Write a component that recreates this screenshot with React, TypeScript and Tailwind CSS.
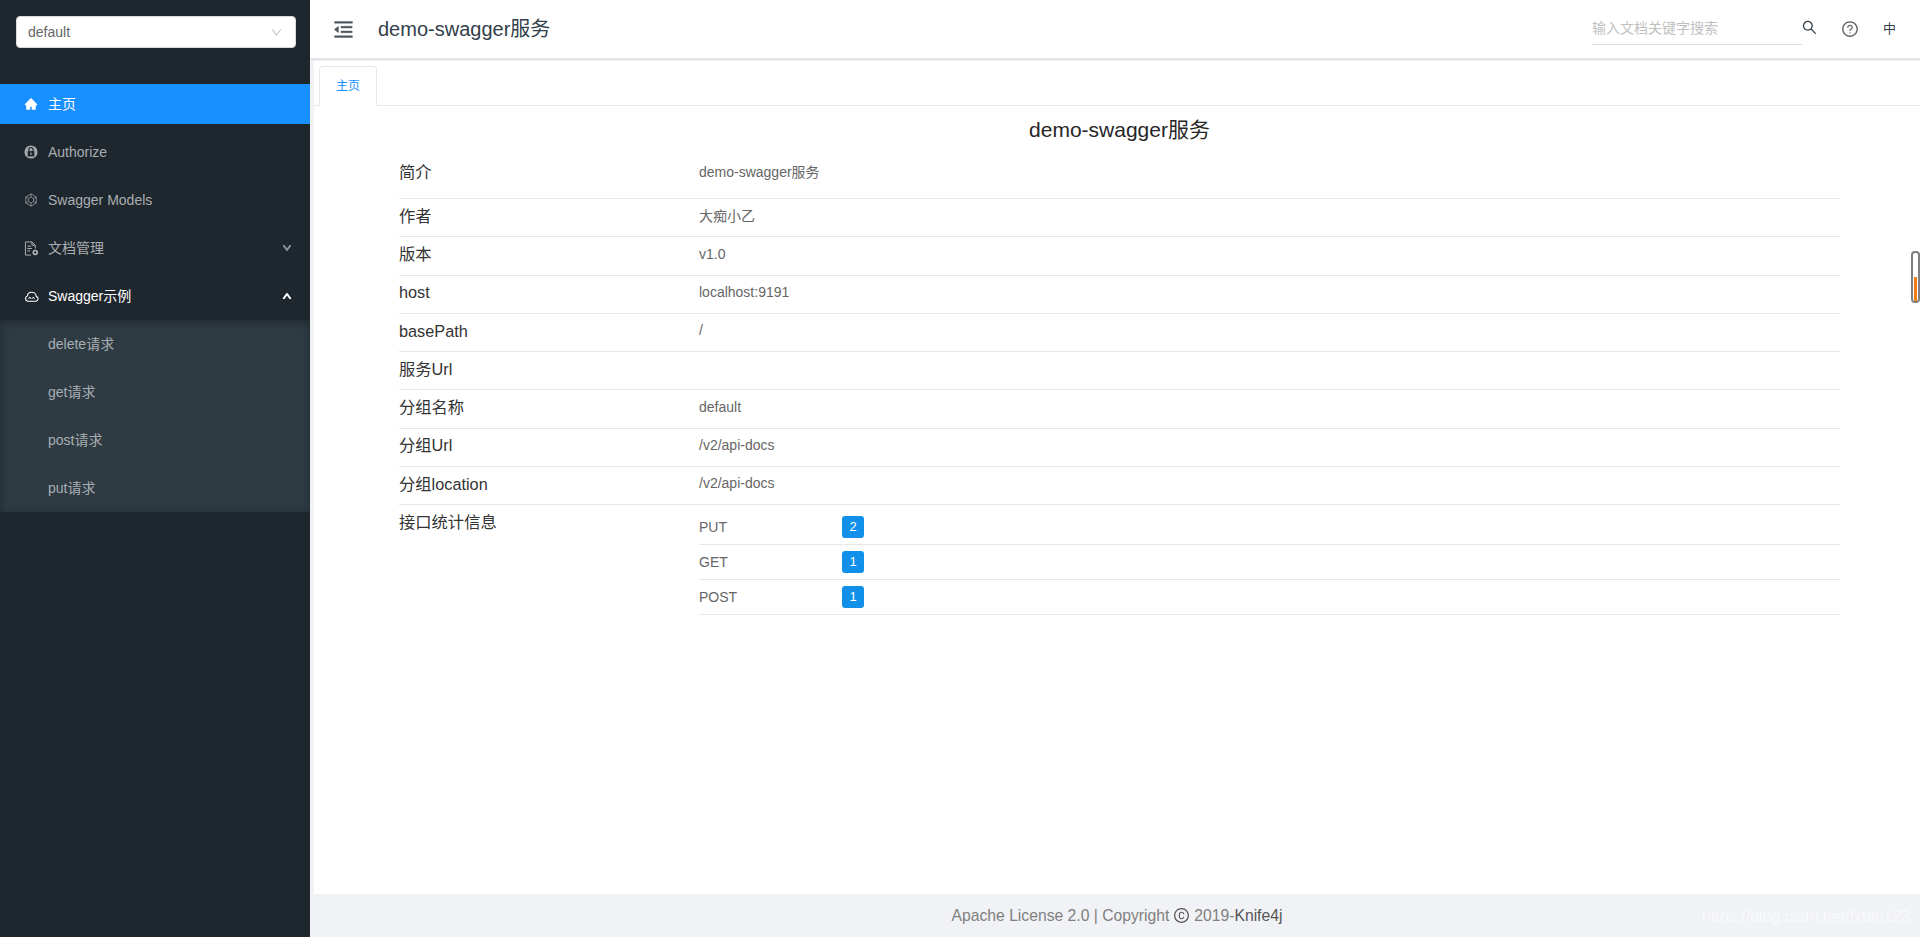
import {
  AiFillHome,
  AiOutlineCopyright,
  AiOutlineDown,
  AiOutlineMenuFold,
  AiOutlineQuestionCircle,
  AiOutlineSearch,
  AiOutlineUp,
} from 'react-icons/ai'

const font = 'font-["Liberation_Sans","Noto_Sans_CJK_SC",sans-serif]'

function LockIcon() {
  return (
    <svg viewBox="0 0 16 16" className="h-[14px] w-[14px]">
      <circle cx="8" cy="8" r="7.5" fill="#a5a9ac" />
      <path d="M4.2 7h7.6v6H4.2z" fill="#1f272e" />
      <path d="M5.6 7V5.2a2.4 2.4 0 0 1 4.8 0V7" fill="none" stroke="#1f272e" strokeWidth="1.3" />
      <rect x="7.3" y="8.6" width="1.4" height="2.8" fill="#a5a9ac" />
    </svg>
  )
}

function ModelIcon() {
  return (
    <svg viewBox="0 0 16 16" className="h-[14px] w-[14px]" fill="none" stroke="#8f9498" strokeWidth="1">
      <path d="M8 1l6 3.5v7L8 15l-6-3.5v-7z" />
      <path d="M8 4.5l3 1.8v3.4L8 11.5 5 9.7V6.3z" />
      <path d="M8 1v3.5M14 4.5l-3 1.8M14 11.5l-3-1.8M8 15v-3.5M2 11.5l3-1.8M2 4.5l3 1.8" />
    </svg>
  )
}

function FileGearIcon() {
  return (
    <svg viewBox="0 0 16 16" className="h-[15px] w-[15px]" fill="none" stroke="#b3b7ba" strokeWidth="1">
      <path d="M7.5 15H1.5V1h7l3.5 3.5V8" />
      <path d="M8.5 1v3.5H12" />
      <path d="M3.5 5.5h4M3.5 8h5M3.5 10.5h3" />
      <circle cx="12" cy="12.2" r="2.1" strokeWidth="1.7" />
    </svg>
  )
}

function CloudIcon() {
  return (
    <svg viewBox="0 0 16 12" className="h-[13px] w-[15px]" fill="none" stroke="#fff" strokeWidth="1.2">
      <path d="M4 11h8.5a2.6 2.6 0 0 0 .6-5.1A4.8 4.8 0 0 0 8.2 1.5 4.6 4.6 0 0 0 3.6 5.4 2.9 2.9 0 0 0 4 11z" />
      <path d="M4.8 8.5l1.5-2 1.2 2M8.5 8.5l1.5-2 1.2 2" strokeWidth="1" />
    </svg>
  )
}

function MenuItem({
  icon,
  label,
  active,
  open,
  arrow,
}: {
  icon: React.ReactNode
  label: string
  active?: boolean
  open?: boolean
  arrow?: 'up' | 'down'
}) {
  return (
    <div
      className={`flex h-10 items-center pl-6 pr-[18px] text-[14px] ${
        active ? 'bg-[#1890ff] text-white' : open ? 'text-white' : 'text-[#a9aeb2]'
      }`}
    >
      <span className="flex w-[24px] items-center">{icon}</span>
      <span className="flex-1">{label}</span>
      {arrow === 'down' && <AiOutlineDown className="text-[10px] text-[#8a8f93]" strokeWidth={110} />}
      {arrow === 'up' && <AiOutlineUp className="text-[10px] text-white" strokeWidth={110} />}
    </div>
  )
}

const rows = [
  ['作者', '大痴小乙'],
  ['版本', 'v1.0'],
  ['host', 'localhost:9191'],
  ['basePath', '/'],
  ['服务Url', ''],
  ['分组名称', 'default'],
  ['分组Url', '/v2/api-docs'],
  ['分组location', '/v2/api-docs'],
]

const stats = [
  ['PUT', '2'],
  ['GET', '1'],
  ['POST', '1'],
]

export default function App() {
  return (
    <div className={`relative flex h-[937px] overflow-hidden bg-white ${font}`}>
      {/* Sidebar */}
      <aside className="w-[310px] shrink-0 bg-[#1f272e]">
        <div className="pl-4 pr-[14px] pt-4">
          <div className="flex h-8 items-center justify-between rounded border border-[#d9d9d9] bg-white pl-[11px] pr-[12px] text-[14px] text-[#666]">
            <span>default</span>
            <AiOutlineDown className="text-[13px] text-[#c4c4c4]" />
          </div>
        </div>
        <div className="mt-9 flex flex-col gap-2">
          <MenuItem icon={<AiFillHome className="text-[14px] text-white" />} label="主页" active />
          <MenuItem icon={<LockIcon />} label="Authorize" />
          <MenuItem icon={<ModelIcon />} label="Swagger Models" />
          <MenuItem icon={<FileGearIcon />} label="文档管理" arrow="down" />
          <MenuItem icon={<CloudIcon />} label="Swagger示例" arrow="up" open />
        </div>
        <div className="mt-1 flex flex-col gap-2 bg-[#2e3b43] py-1 shadow-[inset_0_2px_8px_rgba(0,0,0,0.32)]">
          {['delete请求', 'get请求', 'post请求', 'put请求'].map((item) => (
            <div key={item} className="flex h-10 items-center pl-12 text-[14px] text-[#a9aeb2]">
              {item}
            </div>
          ))}
        </div>
      </aside>

      {/* Main */}
      <main className="flex min-w-0 flex-1 flex-col bg-[#f0f2f5]">
        <header className="flex h-[58px] shrink-0 items-center bg-white pl-[22px] pr-[24px] shadow-[0_1px_3px_rgba(0,21,41,0.12)]">
          <AiOutlineMenuFold className="text-[23px] text-[#4d5760]" strokeWidth={20} />
          <h1 className="ml-[23px] text-[20px] text-[#33404c]">demo-swagger服务</h1>
          <div className="ml-auto -mt-[2px] flex w-[210px] items-center border-b border-[#d9d9d9] py-[6px] text-[14px] leading-5 text-[#bfbfbf]">
            输入文档关键字搜索
          </div>
          <AiOutlineSearch className="-ml-px -mt-[4px] text-[17px] text-[#33404c]" />
          <AiOutlineQuestionCircle className="ml-[23px] text-[18px] text-[#5c5c5c]" />
          <span className="ml-[24px] text-[13px] text-[#33404c]">中</span>
        </header>

        <div className="ml-1 mt-[3px] flex min-h-0 flex-1 flex-col bg-white">
          {/* Tabs */}
          <div className="flex h-[45px] shrink-0 items-end border-b border-[#e8e8e8] pl-[5px]">
            <div className="-mb-px flex h-[40px] w-[58px] items-center justify-center rounded-t border border-b-0 border-[#e8e8e8] bg-white pb-[2px] text-[12px] text-[#1890ff]">
              主页
            </div>
          </div>

          <div className="flex-1 pl-[85px] pr-[80px]">
            <h2 className="mt-[10px] text-center text-[21px] leading-[28px] text-[#262626]">demo-swagger服务</h2>
            <div className="mt-[1px] flex h-[54px] items-center border-b border-[#e8e8e8]">
              <span className="w-[300px] text-[16.3px] leading-6 text-[#333]">简介</span>
              <span className="text-[14px] leading-6 text-[#666]">demo-swagger服务</span>
            </div>
            {rows.map(([label, value]) => (
              <div key={label} className="flex h-[38.25px] items-center border-b border-[#e8e8e8] pb-[3px]">
                <span className="w-[300px] text-[16.3px] text-[#333]">{label}</span>
                <span className="text-[14px] text-[#666]">{value}</span>
              </div>
            ))}
            <div className="flex">
              <span className="w-[300px] pt-[5px] text-[16.3px] leading-6 text-[#333]">接口统计信息</span>
              <div className="flex-1 pt-[5px]">
                {stats.map(([method, count]) => (
                  <div key={method} className="flex h-[35px] items-center border-b border-[#e8e8e8]">
                    <span className="w-[143px] text-[14px] text-[#666]">{method}</span>
                    <span className="flex h-[22px] w-[22px] items-center justify-center rounded-[3px] bg-[#1190ea] text-[13px] text-white">
                      {count}
                    </span>
                  </div>
                ))}
              </div>
            </div>
          </div>

          <footer className="flex h-[43px] shrink-0 items-center justify-center bg-[#f0f2f5] text-[15.7px] text-[#808080]">
            <span>Apache License 2.0 | Copyright</span>
            <AiOutlineCopyright className="mx-[4px] text-[17px] text-[#555]" />
            <span>2019-</span>
            <span className="text-[#555]">Knife4j</span>
          </footer>
        </div>
      </main>

      {/* Scroll indicator */}
      <div className="absolute right-0 top-[251px] h-[52px] w-[9px] overflow-hidden rounded-[4px] border-2 border-[#7f7f7f] bg-white pl-[1px] pt-[24px]">
        <div className="h-full w-[3px] bg-[#f57c14]" />
      </div>

      {/* Watermark */}
      <div className="absolute bottom-[8px] right-[10px] text-[16px] text-white/60">https://blog.csdn.net/fxbin123</div>
    </div>
  )
}
